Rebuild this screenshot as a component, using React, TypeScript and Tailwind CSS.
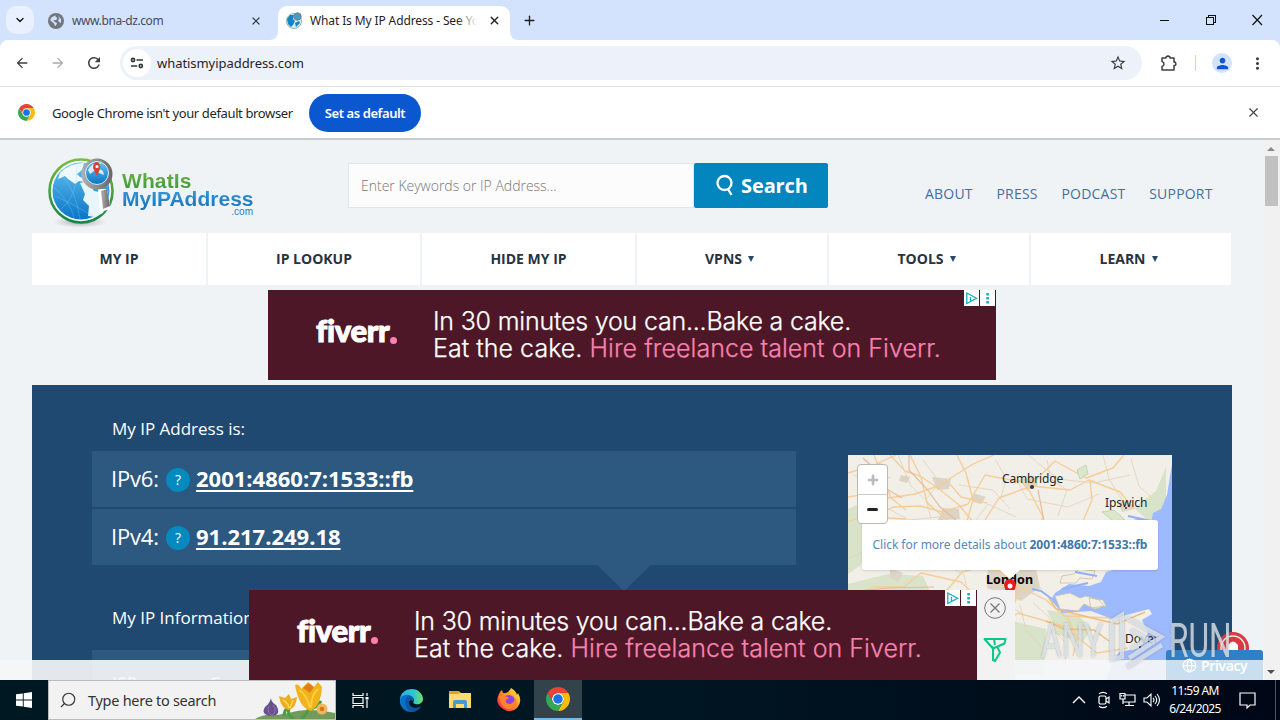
import React from 'react';
import { clsx } from 'clsx';
import { ChevronDown, Globe, Plus, Search, X } from 'lucide-react';
import { MdArrowBack, MdArrowForward, MdMoreVert, MdPerson, MdRefresh, MdStarBorder } from 'react-icons/md';

const NAV = [
  { label: 'MY IP', width: 'w-[174px]' },
  { label: 'IP LOOKUP', width: 'w-[212px]' },
  { label: 'HIDE MY IP', width: 'w-[213px]' },
  { label: 'VPNS', width: 'w-[190px]', menu: true },
  { label: 'TOOLS', width: 'w-[200px]', menu: true },
  { label: 'LEARN', width: 'w-[200px]', menu: true },
];

export default function App() {
  return (
    <div className="relative flex h-[720px] w-[1280px] flex-col overflow-hidden bg-white font-['Open_Sans',sans-serif] text-[#1f1f1f]">
      <TabStrip />
      <Toolbar />
      <DefaultBrowserBar />
      <div className="flex h-[540px] shrink-0">
        <Page />
        <Scrollbar />
      </div>
      <Taskbar />
      <Watermark />
    </div>
  );
}

function TabStrip() {
  return (
    <div className="flex h-10 shrink-0 items-end bg-[#d3e3fd] font-['Noto_Sans',sans-serif] text-[12px]">
      <div className="mb-1.5 ml-1.5 flex h-7 w-7 items-center justify-center rounded-[10px] bg-[#e9f1fe]">
        <ChevronDown size={12} strokeWidth={3} />
      </div>
      <div className="flex h-[34px] w-[244px] items-center pb-[5px] pl-3.5">
        <span className="flex h-4 w-4 items-center justify-center rounded-full bg-[#72777e]">
          <svg width="14" height="14" viewBox="0 0 14 14" fill="#d3e3fd">
            <path d="M1 6 L3 3 L7 1.5 L6.5 3 L8.5 4 L7 6 L4 6.5 L6 8 L8 9 L7 11.5 L6 12 L5 9.5 Z" />
            <path d="M9 2 L12 5 L12 9 L10 8 L9 6 L10.5 5 Z" />
          </svg>
        </span>
        <span className="ml-2 flex-1 tracking-[-0.4px] text-[#474d57]">www.bna-dz.com</span>
        <X size={12} strokeWidth={2.4} className="mr-4 text-[#333b47]" />
      </div>
      <div className="relative flex h-[34px] w-[232px] items-center rounded-t-[9px] bg-white pb-[5px] pl-2">
        <svg className="absolute -left-2 bottom-0" width="8" height="8" viewBox="0 0 8 8"><path d="M8 0 V8 H0 A8 8 0 0 0 8 0" fill="#fff" /></svg>
        <svg className="absolute -right-2 bottom-0" width="8" height="8" viewBox="0 0 8 8"><path d="M0 0 V8 H8 A8 8 0 0 1 0 0" fill="#fff" /></svg>
        <svg width="17" height="17" viewBox="0 0 17 17">
          <circle cx="8" cy="9" r="7.5" fill="#d8edf4" stroke="#8ab9b5" />
          <path d="M1 7 L4 3 L8 3 L7 7 L9 9 L7 13 L5 15 L2 12 Z" fill="#1683c8" />
          <path d="M9 11 L13 9 L14 11 L10 15 Z" fill="#1683c8" />
          <circle cx="11.5" cy="4.5" r="3.7" fill="#479bc5" stroke="#70828b" />
        </svg>
        <div className="relative ml-[7px] w-[167px] overflow-hidden whitespace-nowrap tracking-[-0.12px]">
          What Is My IP Address - See You
          <span className="absolute inset-y-0 right-0 w-5 bg-linear-to-r from-transparent to-white" />
        </div>
        <X size={13} strokeWidth={2.6} className="ml-[11px]" />
      </div>
      <Plus size={15} strokeWidth={2.1} className="mb-[12px] ml-3" />
      <div className="mb-[14px] ml-auto mr-[17px] flex items-center gap-[35px]">
        <svg width="10" height="12" stroke="#111" shapeRendering="crispEdges"><path d="M0 6.5 H9" /></svg>
        <svg width="12" height="12" fill="none" stroke="#111" shapeRendering="crispEdges"><path d="M1.5 3.5 H8.5 V10.5 H1.5 Z M3.5 3.5 V1.5 H10.5 V8.5 H8.5" /></svg>
        <svg width="11" height="12" stroke="#111" strokeWidth="1.2"><path d="M0.5 1 L10 11 M10 1 L0.5 11" /></svg>
      </div>
    </div>
  );
}

function Toolbar() {
  return (
    <div className="relative h-[47px] shrink-0 border-b border-[#dfe1e5] bg-[#d3e3fd]">
      <div className="flex h-[46px] items-center rounded-t-lg bg-white text-[#3c4043]">
        <MdArrowBack size={16} className="ml-[14px]" />
        <MdArrowForward size={16} className="ml-[20px] text-[#aaabad]" />
        <MdRefresh size={18} className="ml-[19px]" />
        <div className="ml-[17px] flex h-[34px] w-[1022px] items-center rounded-full bg-[#edf1fa] pl-[3px]">
          <div className="flex h-7 w-7 items-center justify-center rounded-full bg-white">
            <svg width="14" height="14" viewBox="0 0 14 14" fill="none" stroke="#30343a" strokeWidth="1.6">
              <circle cx="3" cy="4" r="1.6" /><path d="M6.5 4 H13 M1 10 H7.2" /><circle cx="10.8" cy="10" r="1.6" />
            </svg>
          </div>
          <span className="ml-[6px] pt-px font-['Noto_Sans',sans-serif] text-[13px] tracking-[-0.05px] text-[#1f1f1f]">whatismyipaddress.com</span>
          <MdStarBorder size={18} className="ml-auto mr-[15px]" />
        </div>
        <svg className="ml-[17px]" width="19" height="19" viewBox="0 0 19 19" fill="none" stroke="#3c4043" strokeWidth="1.5">
          <path d="M3 4 H7 V3 Q9 1.2 11 3 V4 H15 V8 H16 Q17.8 10 16 11.5 H15 V16 H3 V12.5 Q5 12 5 10 Q5 8 3 7.5 Z" strokeLinejoin="round" />
        </svg>
        <span className="ml-[17px] h-4 w-px bg-[#c7d5ec]" />
        <span className="ml-[16px] flex h-5 w-5 items-center justify-center rounded-full bg-[#d3e3fd] text-[#0b57d0]"><MdPerson size={17} /></span>
        <MdMoreVert size={19} className="ml-[16px]" />
      </div>
    </div>
  );
}

function DefaultBrowserBar() {
  return (
    <div className="flex h-[53px] shrink-0 items-center border-b-2 border-[#cbcccd] bg-white pl-[18px] font-['Noto_Sans',sans-serif] text-[13px]">
      <ChromeLogo size={17} />
      <span className="ml-[17px] w-[257px] whitespace-nowrap pt-[2px] tracking-[-0.37px]">Google Chrome isn't your default browser</span>
      <button className="h-[38px] w-[112px] rounded-full bg-[#0b57d0] pt-[2px] font-semibold tracking-[-0.42px] text-white">Set as default</button>
      <X size={15} strokeWidth={1.7} className="ml-auto mr-[19px] text-[#3c4043]" />
    </div>
  );
}

function Page() {
  return (
    <div className="relative w-[1264px] overflow-hidden bg-[#f0f3f6] pl-8">
      <header className="flex h-[93px] items-start">
        <SiteLogo />
        <div className="ml-[70px] mt-[23px] flex">
          <div className="flex h-[45px] w-[346px] items-center border border-[#e3e5e6] bg-[#fcfcfc] pl-3 text-[14px] font-light tracking-[-0.01px] text-[#777]">Enter Keywords or IP Address...</div>
          <button className="flex h-[45px] w-[134px] items-center rounded-[2px] bg-[#0386bd] pl-[21px] text-[20px] font-bold tracking-[-0.1px] text-white">
            <svg width="20" height="24" viewBox="0 0 20 24" fill="none" stroke="#fff" strokeWidth="2.3"><circle cx="9.5" cy="9" r="7" /><path d="M13 15 L16.5 21" /></svg>
            <span className="ml-[6px]">Search</span>
          </button>
        </div>
        <div className="ml-[97px] mt-[43px] flex gap-[23.8px] text-[14px] font-medium tracking-[0.2px] text-[#44709f]">
          <span>ABOUT</span>
          <span>PRESS</span>
          <span>PODCAST</span>
          <span>SUPPORT</span>
        </div>
      </header>

      <nav className="flex h-[52px] gap-[2px]">
        {NAV.map((item) => (
          <div key={item.label} className={clsx('flex items-center justify-center bg-white pb-[2px] text-[14px] font-bold text-[#27333f]', item.width)}>
            {item.label}
            {item.menu && <span className="ml-[6px] mr-[5px] mt-[2px] h-0 w-0 border-x-[3.5px] border-t-[6px] border-x-transparent border-t-[#24486a]" />}
          </div>
        ))}
      </nav>

      <div className="ml-[236px] mt-[5px]"><FiverrAd /></div>

      <main className="mt-[5px] flex h-[300px] w-[1200px] bg-[#1f4971] pl-[60px] text-white">
        <div className="w-[704px]">
          <h2 className="ml-[20px] mt-[31px] text-[17px] leading-[26px] tracking-[-0.01px]">My IP Address is:</h2>
          <div className="mt-[9px] space-y-[2px]">
            <AddressRow label="IPv6:" value="2001:4860:7:1533::fb" />
            <AddressRow label="IPv4:" value="91.217.249.18" />
          </div>
          <div className="mx-auto -mt-px h-0 w-0 translate-x-[180px] border-x-[28px] border-t-[27px] border-x-transparent border-t-[#2d587f]" />
          <h2 className="ml-[20px] mt-[14px] text-[17px] leading-[26px] tracking-[-0.01px]">My IP Information:</h2>
          <div className="mt-[19px] flex h-12 bg-[#2d587f] pl-5 pt-[20px] text-[17px] font-semibold">
            <span className="w-[97px]">ISP:</span>
            <span>Google</span>
          </div>
        </div>
        <LocationMap />
      </main>

      {/* Sticky footer strip and the floating ad on top of it */}
      <div className="absolute bottom-0 left-0 h-5 w-[1264px] bg-[#f5f6f7]/92" />
      <div className="absolute bottom-0 right-0 h-[50px] w-[98px] overflow-hidden">
        <svg className="absolute left-[50px] top-0" width="34" height="34" viewBox="0 0 34 34">
          <circle cx="17" cy="18" r="16" fill="#da3941" />
          <circle cx="17" cy="18" r="12" fill="none" stroke="#eee" strokeWidth="1.5" />
          <path d="M12 25 V15 Q17 8 22 15 V25" fill="#fff" />
        </svg>
        <div className="absolute bottom-0 flex h-[30px] w-[97px] flex-col justify-end rounded-t-[3px] bg-[#2f80c7]">
          <div className="flex h-5 items-center bg-[#c9dff0] pb-[9px] pl-4 text-[14px] font-semibold tracking-[-0.35px] text-white"><Globe size={15} strokeWidth={2} className="mr-1" />Privacy</div>
        </div>
      </div>
      <div className="absolute bottom-0 left-[249px] flex h-[90px] bg-[#f2f2f2]">
        <FiverrAd />
        <div className="flex w-[38px] flex-col items-center pr-[2px] pt-[7px]">
          <svg width="22" height="22" viewBox="0 0 22 22" fill="none" stroke="#777"><circle cx="11" cy="11" r="10.3" /><path d="M6.5 6.5 L15.5 15.5 M15.5 6.5 L6.5 15.5" strokeWidth="1.3" /></svg>
          <svg className="mt-[18px]" width="24" height="26" viewBox="0 0 24 26" fill="none" stroke="#09c987" strokeWidth="2" strokeLinejoin="round">
            <path d="M1.5 2 H22.5 L21.5 6.5 L10 11.5 Z M6 7.5 L10 10.5 V23 L12 24 L17 15.5 L14.5 10.5 M11 2 L12 8" />
          </svg>
        </div>
      </div>
    </div>
  );
}

function SiteLogo() {
  return (
    <div className="ml-[14px] mt-[15px] flex w-[232px] font-['Liberation_Sans',sans-serif] font-bold">
      <svg width="72" height="74" viewBox="0 0 72 74" className="shrink-0">
        <defs>
          <linearGradient id="ocean" x2="0" y2="1"><stop stopColor="#65c2ee" /><stop offset="1" stopColor="#0875c8" /></linearGradient>
          <linearGradient id="ring" x2="0" y2="1"><stop stopColor="#7dbb3d" /><stop offset="1" stopColor="#168443" /></linearGradient>
          <linearGradient id="metal"><stop stopColor="#b1b1b1" /><stop offset="1" stopColor="#666" /></linearGradient>
          <radialGradient id="shade"><stop stopColor="#777" stopOpacity=".7" /><stop offset="1" stopColor="#aaa" stopOpacity="0" /></radialGradient>
        </defs>
        <ellipse cx="34" cy="67" rx="27" ry="6" fill="url(#shade)" />
        <circle cx="35" cy="36" r="31.5" fill="#f4fbfe" stroke="url(#ring)" strokeWidth="2.6" />
        <circle cx="35" cy="36" r="28.5" fill="url(#ocean)" />
        <path d="M14 18 Q23 8 38 8 L36 15 L31 19 L34 22 L40 24 L39 27 L33 26 L29 29 L22 24 L19 21 L12 24 Z" fill="#eef9fd" />
        <path d="M34 28 L42 26 L48 36 L60 38 L61 48 L57 58 L49 62 L42 61 L43 51 L37 45 L39 39 Z" fill="#e8f5fa" />
        <path d="M9 41 Q25 48 47 61 M15 54 Q32 42 31 10 M28 63 Q25 48 8 32 M16 20 Q30 36 34 64" fill="none" stroke="#8fd3f0" strokeWidth=".5" opacity=".6" />
        <path d="M52 34 L61 34 L65 54 L54 57 Z" fill="#fff" />
        <path d="M55 36 L61 34 L64 51 L57 54 Z" fill="url(#metal)" />
        <circle cx="51" cy="19" r="15.5" fill="url(#metal)" />
        <circle cx="51" cy="18" r="11.5" fill="url(#ocean)" stroke="#d9eef7" />
        <path d="M42 15 Q47 6 55 8 L52 13 L57 16 L58 20 L53 18 L48 16 L44 19 Z" fill="#fff" opacity=".8" />
        <path d="M51 21 L47 13 Q47 7 51 7 Q55 8 54 14 Z" fill="#dd3d35" />
        <circle cx="51" cy="11.5" r="1.6" fill="#fff" />
      </svg>
      <div className="ml-[4px] mt-[16px]">
        <div className="w-[80px] bg-linear-to-b from-[#6bb33f] to-[#3b9642] bg-clip-text text-[21px] leading-[20px] tracking-[0.1px] text-transparent">WhatIs</div>
        <div className="-mt-[3px] bg-linear-to-b from-[#3a9cd8] to-[#1670b7] bg-clip-text text-[21px] leading-[22px] text-transparent">MyIPAddress</div>
        <div className="-mt-[4px] w-[131px] text-right text-[10px] font-normal leading-[11px] text-[#287fc0]">.com</div>
      </div>
    </div>
  );
}

function AddressRow({ label, value }: { label: string; value: string }) {
  return (
    <div className="flex h-[56px] items-center bg-[#2d587f] pb-[2px] pl-[19px]">
      <span className="w-[55px] text-[22px] tracking-[-0.2px]">{label}</span>
      <span className="mt-[3px] flex h-6 w-6 items-center justify-center rounded-full bg-[#058abf] text-[14px]">?</span>
      <span className="ml-[6px] text-[22px] font-bold underline decoration-2 underline-offset-[3px]">{value}</span>
    </div>
  );
}

function FiverrAd() {
  return (
    <div className="relative flex h-[90px] w-[728px] items-start bg-[#4d1727] text-white">
      <div className="ml-[48px] mt-[22px] flex w-[117px] items-end font-['Lato',sans-serif]">
        <span className="text-[31px] font-black leading-[36px] tracking-[-0.3px] [-webkit-text-stroke:1px_#fff]">fiverr</span>
        <span className="mb-[4px] ml-[1px] h-[7px] w-[7px] rounded-full bg-[#ff80b0]" />
      </div>
      <div className="mt-[18px] whitespace-nowrap font-['Inter',sans-serif] text-[25px] font-light leading-[27px] [-webkit-text-stroke:0.25px]">
        <div className="tracking-[-0.21px]">In 30 minutes you can...Bake a cake.</div>
        <div className="tracking-[0.04px]">Eat the cake. <span className="text-[#f981ae]">Hire freelance talent on Fiverr.</span></div>
      </div>
      <svg className="absolute right-0 top-0" width="32" height="16" viewBox="0 0 32 16">
        <path d="M0 0 H15 V16 H0 Z M16 0 H31 V16 H16 Z" fill="#fff" />
        <path d="M2.8 3 L12.5 8.3 L2.8 13.5 Z M6.5 7 V11" fill="none" stroke="#13aebf" strokeWidth="1.3" />
        <path d="M22.3 3 h2.6 v2.6 h-2.6 Z M22.3 7 h2.6 v2.6 h-2.6 Z M22.3 11 h2.6 v2.6 h-2.6 Z" fill="#13aebf" />
      </svg>
    </div>
  );
}

function LocationMap() {
  return (
    <div className="relative ml-[52px] mt-[70px] h-[230px] w-[324px] overflow-hidden font-['Noto_Sans',sans-serif]">
      <svg width="324" height="230" viewBox="0 0 324 230" fill="none">
        <rect width="324" height="230" fill="#f1efe8" />
        <path d="M0 54 L13 48 L25 58 L24 78 L13 110 L0 119 Z M0 129 L40 119 L75 121 L82 136 L0 140 Z M130 171 L160 165 L198 174 L196 220 L130 220 Z M199 155 L230 160 L243 173 L235 187 L210 180 Z M286 53 L308 36 L318 12 L318 48 L302 67 Z" fill="#d3e0c2" opacity=".8" />
        <path d="M95 53 L111 54 L112 64 L90 65 Z M84 22 L103 24 L101 34 L89 35 Z M125 38 L138 42 L133 49 L125 47 Z M29 7 L40 11 L37 18 L28 15 Z M140 104 L186 105 L192 132 L173 146 L139 133 Z M42 113 L55 118 L50 127 L42 123 Z M174 24 L186 21 L190 30 L180 35 Z M270 48 L280 45 L286 54 L274 57 Z M53 20 L62 22 L59 28 L51 26 Z" fill="#dcd4c5" />
        <g stroke="#e2d2b8" strokeWidth=".8">
          <path d="M5 20 L24 28 L43 22 M50 0 L63 31 L90 57 M32 49 L61 65 L91 62 M75 5 L92 28 L78 44 L83 64 M111 30 L145 35 L162 54 M180 0 L210 24 L246 28 L282 20 M169 25 L179 44 L220 52 L251 39 M128 65 L140 49 L168 62 M255 0 L261 24 L276 48 M1 103 L27 92 L54 102 M140 103 L158 137 L194 133 M132 158 L153 145 L176 160 M203 173 L218 188 L217 210" />
          <path d="M148 5 L158 24 L153 42 M199 5 L203 24 L219 35 L210 61 M283 4 L291 31 L304 43 M13 34 L31 36 L36 50 M102 112 L116 120 L119 135 M172 150 L178 175 L194 192 M185 148 L200 161 L210 180" />
        </g>
        <g stroke="#f6cd98" strokeWidth="1.35" strokeLinejoin="round">
          <path d="M0 18 L26 10 L48 0 M42 0 L57 16 L72 21 L90 33 L111 50 L125 67 M0 42 L24 38 L41 43 L67 39 L90 31 L125 9 L146 0" />
          <path d="M27 62 L45 52 L72 51 L95 57 L120 49 L137 20 L184 29 L207 6 L238 23 L265 13 L276 0" />
          <path d="M172 25 L182 37 L195 62 L190 72 M137 65 L151 43 L184 31 M184 31 L222 35 L241 25 L272 37 L286 54 M242 25 L244 45 L235 66" />
          <path d="M26 0 L43 43 L58 55 M62 0 L73 22 L79 48 L103 68 M0 67 L22 58 L41 63 L58 64 M102 29 L113 42 L139 48 M109 0 L118 18 L125 45 L119 66" />
          <path d="M0 144 L25 132 L56 132 L73 118 L113 127 L130 143 L170 131 L198 145 L216 161 L264 163 M91 145 L114 117 L133 112 L153 117 L171 132 L167 148 L139 156 M152 172 L170 158 L215 171 L234 186 L249 198 L280 193 M149 178 L165 214 M219 162 L229 182 L225 201" />
        </g>
        <path d="M15 3 L28 15 L30 29 L54 43 M61 0 L61 15 L79 34 L92 52 L109 66 M190 35 L196 66 M0 137 L40 133 L86 132" stroke="#eab897" strokeWidth="1.1" />
        <path d="M324 9 L319 40 L313 54 L305 58 L302 72 L276 112 L258 117 L253 127 L241 131 L221 129 L207 138 L203 145 L214 158 L243 156 L264 164 L301 154 L304 159 L294 165 L300 178 L292 193 L271 197 L264 209 L256 230 L324 230 Z" fill="#9ebaff" />
        <path d="M207 141 L222 138 L232 143 L238 141 L251 145 L256 151 L247 154 L236 149 L230 156 L212 154 Z M214 121 L226 119 L231 114 L247 116 L244 124 L232 123 L228 128 L212 128 Z M241 143 L255 145 L258 151 L243 153 Z" fill="#f3efe4" stroke="#cfc0a2" strokeWidth=".8" />
        <path d="M280 61 L303 66 L309 70 M272 69 L294 64 L306 72 M184 134 L193 136 L204 144 M227 117 L249 121 M214 134 L240 128" stroke="#92b2f5" strokeWidth="2" />
        <path d="M201 143 L208 154 L244 163 L269 169 L297 157 M198 166 L216 174 L246 175 L261 186" stroke="#efbc7c" strokeWidth="1.4" />
        <path d="M229 15 L238 10 L240 19 L232 24 Z M254 57 L266 55 L277 65 L265 66 Z M0 149 L24 143 L48 149 L52 165 L0 179 Z" stroke="#b9d0ae" strokeWidth=".8" fill="#dce6c8" />
        <circle cx="184" cy="32" r="2" fill="#333" /><circle cx="278" cy="53" r="1" fill="#333" /><circle cx="292" cy="192" r="1.2" fill="#333" />
      </svg>
      <div className="absolute left-[154px] top-[15px] text-[12px] leading-[18px] tracking-[-0.15px] text-[#252525]">Cambridge</div>
      <div className="absolute left-[257px] top-[39px] text-[12px] leading-[18px] tracking-[-0.1px] text-[#252525]">Ipswich</div>
      <div className="absolute left-[138px] top-[116px] text-[12.5px] font-bold leading-[18px] tracking-[0.05px] text-black">London</div>
      <div className="absolute left-[277px] top-[175px] text-[12px] leading-[18px] text-[#252525]">Dover</div>
      <svg className="absolute left-[155px] top-[123px]" width="14" height="22"><path d="M1 7 A6 6 0 1 1 13 7 Q12 13 7 21 Q2 13 1 7" fill="#ed171e" /><circle cx="7" cy="8" r="2.5" fill="#fff" /></svg>
      <div className="absolute left-[14px] top-[65px] flex h-[50px] w-[296px] items-center justify-center whitespace-nowrap rounded-[3px] bg-white text-[12px] tracking-[-0.04px] text-[#528abb] shadow-sm">
        <span>Click for more details about <b className="tracking-[-0.02px] text-[#3d78aa]">2001:4860:7:1533::fb</b></span>
        <span className="absolute left-[138px] top-[50px] border-x-[10px] border-t-[9px] border-x-transparent border-t-white" />
      </div>
      <div className="absolute left-[9px] top-[9px] flex h-[60px] w-[31px] flex-col rounded-[4px] border border-[#bbb9b3] bg-white">
        <div className="flex h-[30px] items-center justify-center border-b border-[#ccc] text-[#bbb]"><Plus size={14} strokeWidth={4.5} /></div>
        <div className="flex h-[28px] items-center justify-center"><span className="h-[3px] w-[11px] rounded-full bg-[#222]" /></div>
      </div>
    </div>
  );
}

function Scrollbar() {
  return (
    <div className="flex w-4 flex-col items-center bg-[#f1f1f1] pr-[2px]">
      <span className="mt-[7px] border-x-[4px] border-b-[4px] border-x-transparent border-b-[#8a8a8a]" />
      <span className="mt-[5px] h-[50px] w-[13px] bg-[#c1c1c1]" />
      <span className="mb-[6px] mt-auto border-x-[4px] border-t-[4px] border-x-transparent border-t-[#505050]" />
    </div>
  );
}

function Taskbar() {
  return (
    <div className="flex h-10 shrink-0 bg-linear-to-r from-[#001821] via-[#001723] to-[#000716] font-['Noto_Sans',sans-serif] text-white">
      <div className="flex w-12 items-center justify-center">
        <svg width="16" height="16" viewBox="0 0 16 16" fill="#fff"><path d="M0 2.3 L6.8 1.4 V7.5 H0 Z M7.7 1.3 L16 0 V7.5 H7.7 Z M0 8.4 H6.8 V14.6 L0 13.7 Z M7.7 8.4 H16 V16 L7.7 14.7 Z" /></svg>
      </div>
      <div className="relative flex w-[288px] items-center border border-[#b9bcbd] bg-[#f2f2f2] text-[#333]">
        <Search size={18} strokeWidth={1.5} className="ml-[10px] -scale-x-100" />
        <span className="ml-[11px] pt-px text-[14.5px] tracking-[-0.28px]">Type here to search</span>
        <Crocuses />
      </div>
      <div className="flex w-12 items-center justify-center">
        <svg width="17" height="17" viewBox="0 0 17 17" fill="none" stroke="#fff" strokeWidth="1.2"><path d="M1 1 V3.5 H11 V1 M1 16 V13.5 H11 V16 M1 5.5 H11 V11.5 H1 Z M15 1 V4 M15 8 V16" /><path d="M13.5 5 h3 v2.5 h-3 Z" fill="#fff" stroke="none" /></svg>
      </div>
      <div className="ml-[3px] flex w-12 items-center justify-center"><EdgeLogo /></div>
      <div className="flex w-[50px] items-center justify-center"><FolderIcon /></div>
      <div className="flex w-[48px] items-center justify-center"><FirefoxLogo /></div>
      <div className="ml-px flex w-12 items-center justify-center border-b-2 border-[#77b8e9] bg-[#33434b]"><ChromeLogo size={24} /></div>
      <div className="ml-auto flex items-center">
        <svg width="14" height="10" viewBox="0 0 14 10" fill="none" stroke="#fff" strokeWidth="1.4"><path d="M1 8 L7 2 L13 8" /></svg>
        <svg className="ml-[11px]" width="14" height="18" viewBox="0 0 14 18" fill="none" stroke="#fff" strokeWidth="1.2"><rect x="2" y="5" width="7" height="8" rx="1.5" /><path d="M9 8 L12 6 V12 L9 10 M2 2.8 Q6 0 10 2.8 M2 15.2 Q6 18 10 15.2" /></svg>
        <svg className="ml-[8px]" width="18" height="16" viewBox="0 0 18 16" fill="none" stroke="#fff" strokeWidth="1.2"><path d="M6 3 H16 V10 H4 M4 7 V12 M10 10 V13 M6 13.5 H15 M1 1.5 H6 V7 H1 Z M2.5 3 V4.5 M4.5 3 V4.5" /></svg>
        <svg className="ml-[6px]" width="18" height="16" viewBox="0 0 18 16" fill="none" stroke="#fff" strokeWidth="1.1"><path d="M1 6 H4 L8 2 V14 L4 10 H1 Z M10 6 Q12 8 10 10 M12 4 Q15.5 8 12 12 M14 2 Q19 8 14 14" /></svg>
        <div className="ml-[5px] w-[58px] text-center text-[12px] leading-[18px] tracking-[-0.6px]">
          <div>11:59 AM</div>
          <div>6/24/2025</div>
        </div>
        <svg className="ml-[15px] mr-[19px]" width="17" height="18" viewBox="0 0 17 18" fill="none" stroke="#fff" strokeWidth="1.2"><path d="M1 2 H16 V14 H11 L8 17 V14 H1 Z" /></svg>
        <span className="mr-[4px] h-10 w-px bg-[#4b535b]" />
      </div>
    </div>
  );
}

function Crocuses() {
  return (
    <svg className="absolute bottom-0 right-0" width="80" height="38" viewBox="0 0 80 38">
      <path d="M0 38 Q10 32 22 34 L34 32 Q52 26 80 32 V38 Z" fill="#729b5b" />
      <path d="M16 17 Q16 21 21 24 Q27 34 17 35 Q5 34 10 26 Q14 23 15 20 Z" fill="#67508c" /><path d="M14 25 Q11 30 17 35 M18 24 Q23 29 17 35" stroke="#9477ad" fill="none" />
      <path d="M34 27 Q32 35 39 38 M35 24 Q29 29 29 35 M55 24 Q52 34 46 38 M54 28 Q61 28 66 20" fill="none" stroke="#4f9b46" strokeWidth="3" />
      <path d="M24 15 L30 17 L34 13 L36 18 L42 16 Q41 27 34 29 Q26 28 24 15 Z" fill="#edac21" /><path d="M28 19 Q33 22 34 27 M38 19 L35 27" fill="none" stroke="#ffdb4a" strokeWidth="1.5" />
      <path d="M40 4 Q44 2 46 8 L53 1 L58 7 L63 1 L67 6 Q66 24 56 30 Q44 27 40 4 Z" fill="#f2b21c" /><path d="M44 9 Q52 14 55 27 M63 8 Q56 14 56 27" fill="none" stroke="#ffcf3c" strokeWidth="2" /><path d="M48 7 L54 2 L59 6 L55 12 Z" fill="#e27d16" />
      <circle cx="67" cy="28" r="5.5" fill="#f1b75d" /><circle cx="67" cy="28" r="2.3" fill="#d97720" />
    </svg>
  );
}

function ChromeLogo({ size }: { size: number }) {
  return (
    <svg width={size} height={size} viewBox="0 0 48 48" className="shrink-0">
      <circle cx="24" cy="24" r="12" fill="#fff" />
      <path d="M24 12H44.78A24 24 0 0 0 3.22 12L13.61 30A12 12 0 0 1 24 12Z" fill="#ea4335" />
      <path d="M34.39 30L24 48A24 24 0 0 0 44.78 12H24A12 12 0 0 1 34.39 30Z" fill="#fbbc04" />
      <path d="M13.61 30L3.22 12A24 24 0 0 0 24 48L34.39 30A12 12 0 0 1 13.61 30Z" fill="#34a853" />
      <circle cx="24" cy="24" r="9.5" fill="#1a73e8" />
    </svg>
  );
}

function EdgeLogo() {
  return (
    <svg width="25" height="25" viewBox="0 0 25 25">
      <defs>
        <linearGradient id="edgeTop"><stop stopColor="#27aee7" /><stop offset=".6" stopColor="#2cc8d0" /><stop offset="1" stopColor="#72de62" /></linearGradient>
        <linearGradient id="edgeBase"><stop stopColor="#0875ce" /><stop offset="1" stopColor="#125ba9" /></linearGradient>
      </defs>
      <path d="M1 12 C1 4 8 1 13 1 C19 1 24 6 24 11 C24 15 20 17 16 16 C13 15 15 14 15 12 C15 8 9 7 5 10 C3 12 2 15 2 17 Z" fill="url(#edgeTop)" />
      <path d="M1 13 C1 8 6 6 10 7 C14 8 16 11 14 13 C12 11 9 13 10 16 C11 20 17 22 22 18 C20 22 16 24 12 24 C6 24 1 19 1 13 Z" fill="url(#edgeBase)" />
      <path d="M8 9 C4 14 7 22 13 24 C17 24 20 22 22 18 C16 22 10 18 10 14 C10 11 13 12 14 13 C15 10 12 7 8 9 Z" fill="#0c4c98" opacity=".65" />
    </svg>
  );
}

function FolderIcon() {
  return (
    <svg width="22" height="20" viewBox="0 0 22 20">
      <path d="M0 1 H10 L12 3 H21 V7 H0 Z" fill="#dfa22a" />
      <path d="M0 4 L9 4 L11 3 H22 V18 H0 Z" fill="#ffda74" />
      <path d="M4 18 V12 Q4 10 6 10 H16 Q18 10 18 12 V18 H15 V14 H7 V18 Z" fill="#459bd3" />
    </svg>
  );
}

function FirefoxLogo() {
  return (
    <svg width="24" height="24" viewBox="0 0 24 24">
      <defs><linearGradient id="fox" x1="1" x2="0" y2="1"><stop stopColor="#fff44f" /><stop offset=".35" stopColor="#ffad25" /><stop offset=".68" stopColor="#ff5a31" /><stop offset="1" stopColor="#ed006d" /></linearGradient></defs>
      <path d="M3 4 L5 2 L6 5 L9 5 Q13 3 14 0 Q19 3 20 7 L21 5 Q26 14 20 20 Q14 26 6 21 Q-3 15 2 6 Z" fill="url(#fox)" />
      <circle cx="12" cy="13" r="6" fill="#8f42df" />
      <path d="M2 8 Q8 7 12 10 L9 12 Q8 16 13 16 Q18 14 18 10 Q22 17 16 20 Q8 23 4 16 Z" fill="#ff832c" />
    </svg>
  );
}

function Watermark() {
  return (
    <div className="pointer-events-none absolute left-[1041px] top-[611px] flex items-center text-[#e6ebf0]/75 drop-shadow-[0_0_1px_rgba(90,100,110,0.55)]">
      <span className="w-[66px] origin-left scale-x-[0.66] font-['Roboto',sans-serif] text-[48px] font-normal leading-[60px]">ANY</span>
      <svg width="62" height="60" viewBox="0 0 62 60" fill="none" stroke="currentColor" strokeWidth="4.5">
        <path d="M5 48 V10 L15 4 V46 Z" /><path d="M20 7 L54 26 L22 47 M24 19 L40 28 L24 38 M20 56 L55 34" />
      </svg>
      <span className="origin-left scale-x-[0.66] font-['Roboto',sans-serif] text-[48px] font-normal leading-[60px]">RUN</span>
    </div>
  );
}
